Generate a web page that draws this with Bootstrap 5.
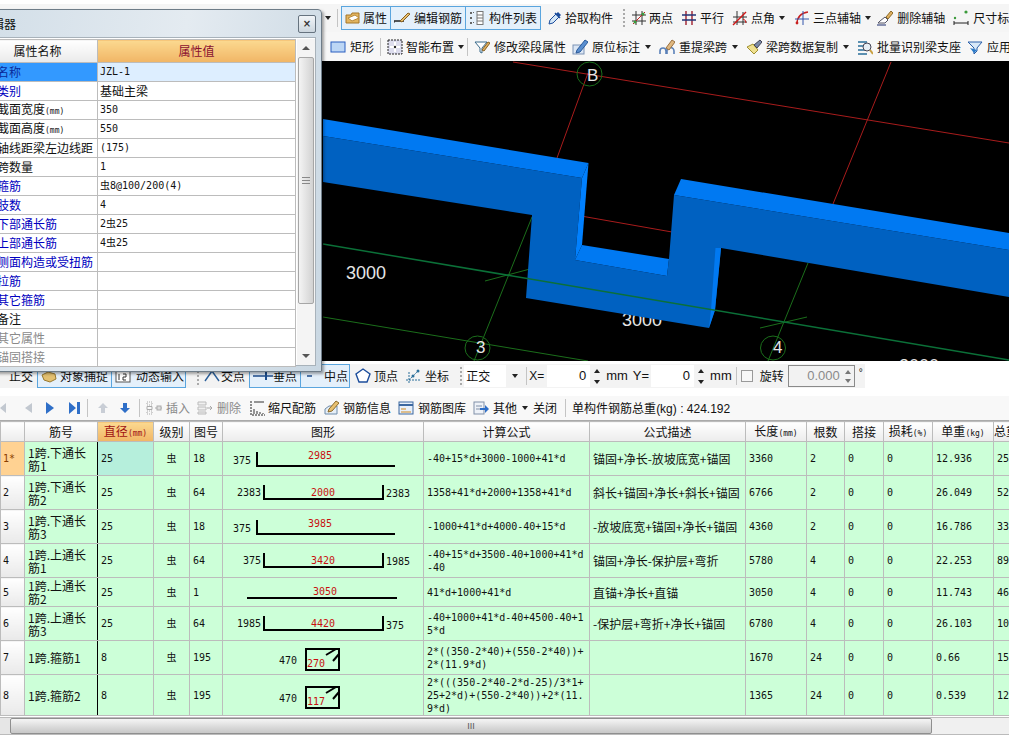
<!DOCTYPE html>
<html lang="zh-CN">
<head>
<meta charset="utf-8">
<title>属性编辑器</title>
<link href="https://cdn.jsdelivr.net/npm/bootstrap@5.3.0/dist/css/bootstrap.min.css" rel="stylesheet">
<style>
html,body{margin:0;height:736px;width:1009px;overflow:hidden;background:#fff}
body{font-family:"Noto Sans CJK SC","Liberation Sans",sans-serif;font-size:12px;line-height:14px;color:#111;position:relative}
.app-col{width:1009px;height:736px}
.tbar{flex:none;white-space:nowrap}
.tb-one{height:28px;margin-top:4px;background:#f5f5f5;padding-left:324px;gap:6px}
.tb-two{height:29px;background:#f7f7f7;padding-left:330px;gap:6px}
.tb-three{height:24px;margin-top:3px;background:#f3f3f3;width:865px}
.tb-four{height:25px;margin-top:8px;background:#f8f8f8;border-bottom:1px solid #aaa}
.tool{display:flex;align-items:center;gap:4px;height:100%}
.tool.g0{gap:0}.tool.g1{gap:1px}.tool.g2{gap:2px}.tool.g3{gap:3px}.tool.g5{gap:5px}
.tool.dim{color:#8a8a8a}
.ico{width:16px;height:16px;flex:none;display:block}
.ico.wide{width:20px}
.tri{width:0;height:0;border:3px solid transparent;border-top:4px solid #222;border-bottom:0;margin-left:1px;flex:none}
.vsep{width:1px;height:18px;background:#c4c4c4;flex:none}
.vgrip{width:0;height:18px;border-left:2px dotted #aaa;flex:none}
.hilite{background:#e4f0fb;border:1px solid #5aa5de;height:24px;padding:0 3px}
.hilite+.hilite{border-left:0}
.hilite.pr1{padding-right:1px}
.canvas-svg{display:block;flex:none}
.canvas-svg text{font-family:"Liberation Sans",sans-serif;font-size:18px;fill:#e6e6e6}
.canvas-svg text.axl{font-size:17px}
.numbox{background:#fff;height:22px;line-height:22px;text-align:right;padding-right:4px;width:43px;font-family:"Liberation Sans",sans-serif;font-size:13px;flex:none}
.numbox.pick{width:42px;text-align:left;padding:0 0 0 2px;font-family:inherit;font-size:12px}
.spin{display:flex;flex-direction:column;gap:7px;width:8px;align-items:center;flex:none}
.spin i{display:block;width:0;height:0;border:3px solid transparent}
.spin .up{border-bottom:4px solid #222;border-top:0}
.spin .dn{border-top:4px solid #222;border-bottom:0}
.latin{font-family:"Liberation Sans",sans-serif;font-size:12px}
.latin.big{font-size:13px}
.chk{width:12px;height:12px;border:1px solid #999;background:#f7f7f7;flex:none}
.angbox{width:67px;height:22px;border:1px solid #8a8a8a;background:#f2f2f2;color:#8a8a8a;display:flex;align-items:center;justify-content:flex-end;gap:4px;padding-right:2px;font-family:"Liberation Sans",sans-serif;font-size:13px;flex:none}
.angbox .up{border-bottom-color:#777}.angbox .dn{border-top-color:#777}
.angbox .spin{gap:5px}
.deg{font-size:10px;align-self:flex-start;margin-top:2px}
.l2{margin-left:2px}.l3{margin-left:3px}.l4{margin-left:4px}.l5{margin-left:5px}.l6{margin-left:6px}.l7{margin-left:7px}.l8{margin-left:8px}.l9{margin-left:9px}.l10{margin-left:10px}.l11{margin-left:11px}.l13{margin-left:13px}.l14{margin-left:14px}.l18{margin-left:18px}
.ln2{margin-left:-2px}.ln3{margin-left:-3px}.ln4{margin-left:-4px}
.p9{padding-left:9px}
.sheet-wrap{height:296px;flex:none;overflow:hidden;width:1009px}
.table.sheet{table-layout:fixed;width:1058px;border-collapse:collapse;margin:0;--bs-table-bg:transparent;--bs-table-border-color:#bcbcbc;color:#111;font-size:12px;line-height:13px}
.sheet col:nth-child(1){width:24px}.sheet col:nth-child(2){width:73px}.sheet col:nth-child(3){width:56px}.sheet col:nth-child(4){width:36px}.sheet col:nth-child(5){width:33px}.sheet col:nth-child(6){width:201px}.sheet col:nth-child(7){width:166px}.sheet col:nth-child(8){width:156px}.sheet col:nth-child(9){width:61px}.sheet col:nth-child(10){width:38px}.sheet col:nth-child(11){width:39px}.sheet col:nth-child(12){width:49px}.sheet col:nth-child(13){width:61px}.sheet col:nth-child(14){width:65px}
.table.sheet>*>*>*{padding:0 3px;vertical-align:middle;border:1px solid #bcbcbc;white-space:nowrap;background:#ccffd8;color:#111;box-shadow:none;overflow:hidden}
.sheet tr.h34>*{height:34px}.sheet tr.h29>*{height:29px}.sheet tr.h41>*{height:41px}
.table.sheet>thead>tr>th{height:20px;background:linear-gradient(#fff,#ececec);font-weight:400;text-align:center;padding:0}
.table.sheet>thead>tr>th.hot{background:linear-gradient(#fbd990,#f1b565);color:#a01010}
.table.sheet>tbody>tr>th{background:linear-gradient(#fff,#e9e9e9);font-weight:400;padding-left:2px}
.table.sheet>tbody>tr>th.hot{background:#ffd292;color:#8a3c00}
.table.sheet>tbody>tr>td.focus{background:#b6efdc}
.table.sheet>tbody>tr>td.bar-end{border-right:1px solid #000}
.table.sheet>tbody>tr>td.shape{padding:0}
.shape svg{display:block}
.mono,.table.sheet td.mono,.table.sheet th.mono,.table.prop-table td.mono{font-family:"DejaVu Sans Mono","Noto Sans CJK SC",monospace;font-size:10px}
.mid{text-align:center}
.mm{font-family:"DejaVu Sans Mono",monospace;font-size:8px}
.shape text{font-family:"DejaVu Sans Mono",monospace;font-size:10px;fill:#111;dominant-baseline:central}
.shape text.rd{fill:#c81010;text-anchor:middle}
.shape path{stroke:#000;stroke-width:2;fill:none}
.hscroll{height:18px;flex:none;background:#f0f0f0;border-top:1px solid #bbb;border-bottom:1px solid #bbb}
.hs-btn{width:10px;background:#e6e6e6;flex:none}
.hs-thumb{width:922px;background:linear-gradient(#f5f5f5,#d4d4d4 70%,#c8c8c8);border:1px solid #8f8f8f;border-radius:2px;font-family:"Liberation Sans",sans-serif;font-size:9px;color:#555;line-height:14px;text-align:center}
.prop-win{position:absolute;left:-50px;top:9px;width:372px;height:363px;background:linear-gradient(100deg,#cfdce6,#e4ebf1 55%,#c9d7e2);border:1px solid #6e7c88;border-radius:4px 4px 0 0;box-shadow:2px 2px 3px rgba(0,0,0,.35)}
.prop-title{height:27px;padding:0 5px;flex:none}
.prop-x{width:18px;height:18px;border:1px solid #66737f;border-radius:2px;background:linear-gradient(#f2f5f8,#ccd6de);font-size:10px;line-height:15px;text-align:center;color:#333;font-family:"DejaVu Sans",sans-serif;font-weight:700}
.prop-panel{margin:0 5px 0 21px;height:329px;background:#fff;border:1px solid #a8b2ba;padding:1px 0 0 4px}
.table.prop-table{table-layout:fixed;width:318px;border-collapse:collapse;margin:0;font-size:12px;line-height:14px;--bs-table-bg:transparent;flex:none}
.prop-table col:nth-child(1){width:120px}.prop-table col:nth-child(2){width:198px}
.table.prop-table>*>*>*{height:19px;padding:0 2px;border:1px solid #bcbcbc;background:#fff;color:#111;white-space:nowrap;vertical-align:middle;box-shadow:none;overflow:hidden}
.table.prop-table>thead>tr>th{height:23px;font-weight:400;text-align:center;background:linear-gradient(#fff,#eaeaea);color:#111}
.table.prop-table>thead>tr>th.gold{background:linear-gradient(#fbd990,#f1b565);color:#8a1030}
.table.prop-table>tbody>tr>th{font-weight:400;padding-left:19px}
.table.prop-table>tbody>tr>th.bl{color:#0000c0}
.table.prop-table>tbody>tr>th.gy{color:#8a8a8a}
.table.prop-table>tbody>tr>th.sel{background:#3399ff;color:#0a2a9a}
.table.prop-table>tbody>tr>td.sel{background:#ddeeff}
.vscroll{width:18px;flex:none;margin-left:1px;background:#f4f4f4}
.vthumb{margin:7px 1px 0 1px;height:247px;background:linear-gradient(90deg,#f4f4f4,#d2d2d2);border:1px solid #a6a6a6;border-radius:2px;flex:none}
.vgrip-lines{width:8px;height:7px;border-top:1px solid #888;border-bottom:1px solid #888;position:relative}
.vgrip-lines::after{content:"";position:absolute;left:0;right:0;top:2px;height:1px;background:#888}
.v-tri-up,.v-tri-dn{width:0;height:0;border:4px solid transparent;align-self:center;flex:none}
.v-tri-up{border-bottom:4px solid #555;border-top:0;margin-top:7px}
.v-tri-dn{border-top:4px solid #555;border-bottom:0;margin-top:50px}
</style>
</head>
<body>
<svg width="0" height="0" class="position-absolute">
<defs>
<symbol id="i-prop" viewBox="0 0 16 16"><path d="M1 5h5l1-2h7v10H1z" fill="#e2b560" stroke="#a5772a"/><path d="M3 8l7-3 4 3-7 3z" fill="#fff" stroke="#b98a3a"/></symbol>
<symbol id="i-rebar" viewBox="0 0 16 16"><path d="M0 11h10" stroke="#222" stroke-width="1.5"/><path d="M0 11v2" stroke="#222"/><path d="M6 11L14 3l2 1-8 8z" fill="#e8c070" stroke="#886020"/></symbol>
<symbol id="i-list" viewBox="0 0 16 16"><g fill="#666"><rect x="1" y="2" width="2" height="2"/><rect x="1" y="7" width="2" height="2"/><rect x="1" y="12" width="2" height="2"/><rect x="4" y="2" width="1" height="1"/><rect x="4" y="12" width="1" height="1"/></g><rect x="8" y="1.5" width="6" height="13" fill="#fff" stroke="#777"/><path d="M8 5h6M8 8h6M8 11h6" stroke="#777"/></symbol>
<symbol id="i-drop" viewBox="0 0 16 16"><path d="M2 14l1-4 6-6 3 3-6 6z" fill="#d5e7f7" stroke="#1c4d9c"/><path d="M9 4l2-2 3 3-2 2z" fill="#1c4d9c"/><path d="M8 3l5 5" stroke="#1c4d9c" stroke-width="1.5"/></symbol>
<symbol id="i-two" viewBox="0 0 16 16"><path d="M5 1v14M11 1v14M1 5h14M1 11h14" stroke="#333"/><path d="M2 14L14 2" stroke="#c02020"/><circle cx="4" cy="12" r="1.5" fill="#3a9a3a"/><circle cx="12" cy="4" r="1.5" fill="#3a9a3a"/></symbol>
<symbol id="i-par" viewBox="0 0 16 16"><path d="M5 1v14M11 1v14" stroke="#a02030" stroke-width="1.4"/><path d="M1 5h14M1 10h14" stroke="#223377" stroke-width="1.4"/></symbol>
<symbol id="i-ang" viewBox="0 0 16 16"><path d="M5 1v14M11 2v13M1 7h14M1 12h14" stroke="#333"/><path d="M1 15L14 2" stroke="#d01818" stroke-width="1.4"/><path d="M11 9a4 4 0 0 1 3 4" stroke="#d01818" fill="none"/></symbol>
<symbol id="i-arc" viewBox="0 0 16 16"><path d="M3 14C3 7 7 3 14 2" stroke="#c82020" stroke-width="1.4" fill="none"/><path d="M1 9h14M9 1v14" stroke="#3355aa"/><circle cx="3" cy="13" r="1.4" fill="#c82020"/></symbol>
<symbol id="i-brush" viewBox="0 0 16 16"><path d="M9 7l5-6 2 2-5 6z" fill="#e0b060" stroke="#8a6a2a"/><path d="M3 11l5-4 3 3-3 3H1z" fill="#fff" stroke="#556"/><path d="M0 15h9" stroke="#8890b0" stroke-width="2"/></symbol>
<symbol id="i-dim" viewBox="0 0 16 16"><path d="M1 11v4M15 11v4M1 13h14" stroke="#222"/><circle cx="2" cy="8" r="1.2" fill="#3a9a3a"/><circle cx="13" cy="2" r="1.6" fill="#3a9a3a"/></symbol>
<symbol id="i-rect" viewBox="0 0 16 16"><rect x="1" y="3" width="14" height="10" fill="#bcd6f5" stroke="#2a5fc0"/></symbol>
<symbol id="i-smart" viewBox="0 0 16 16"><rect x="1" y="1" width="14" height="14" fill="#dde" stroke="#222" stroke-dasharray="2 1"/><path d="M8 3v10M3 8h10" stroke="#fff" stroke-width="2"/><circle cx="8" cy="8" r="1.2" fill="#222"/></symbol>
<symbol id="i-funnel" viewBox="0 0 16 16"><path d="M1 3h12L8 9v5l-2-1V9z" fill="#fff" stroke="#3a6a8a"/><path d="M8 11l6-8 2 1-6 8z" fill="#e0b060" stroke="#886020"/></symbol>
<symbol id="i-note" viewBox="0 0 16 16"><rect x="1" y="6" width="11" height="9" fill="#dbe6f4" stroke="#7c93b5"/><path d="M5 11L13 1l3 2-8 10-4 1z" fill="#5a8fd0" stroke="#2a5a9a"/></symbol>
<symbol id="i-span" viewBox="0 0 16 16"><path d="M1 15v-3a3 3 0 0 1 6 0v3M8 15v-3a3 3 0 0 1 7 0v3" fill="none" stroke="#5a80b8" stroke-width="1.6"/><path d="M7 9l6-8 3 2-6 8z" fill="#e0b880" stroke="#997040"/></symbol>
<symbol id="i-copy" viewBox="0 0 16 16"><path d="M1 8l6-3 5 6-4 4z" fill="#efe090" stroke="#a09030"/><path d="M8 6l6-5 2 2-5 6z" fill="#7a8aa8" stroke="#445"/></symbol>
<symbol id="i-batch" viewBox="0 0 16 16"><path d="M1 3h9M1 7h7M1 11h7M1 15h9" stroke="#2a6f9a" stroke-width="1.5"/><circle cx="10" cy="8" r="4" fill="#e6eef5" stroke="#445"/><path d="M13 11l3 4" stroke="#c9a040" stroke-width="2"/></symbol>
<symbol id="i-apply" viewBox="0 0 16 16"><path d="M1 3h14l-5 6v3l-3 3v-6z" fill="#d8e8f8" stroke="#2a5fa8"/><path d="M3 9l4 5 3-3z" fill="#2a7ac8"/></symbol>
<symbol id="i-ins" viewBox="0 0 16 16"><path d="M1 2h5v3H1zM1 11h5v3H1z" fill="none" stroke="#aaa" stroke-dasharray="1 1"/><path d="M1 6.5h5v3H1z" fill="none" stroke="#aaa"/><path d="M9 8h7" stroke="#aaa"/><rect x="11" y="6" width="4" height="4" fill="#ddd" stroke="#aaa"/></symbol>
<symbol id="i-del" viewBox="0 0 16 16"><path d="M1 2h8v3H1zM1 7h8v3H1zM1 12h8v2H1z" fill="#f0f0f0" stroke="#bbb"/><path d="M10 8h5m-2-2l2 2-2 2" fill="none" stroke="#aaa"/></symbol>
<symbol id="i-scale" viewBox="0 0 16 16"><path d="M1 1v14h14" fill="none" stroke="#222" stroke-dasharray="2 1"/><path d="M4 2h10M4 14v-5M7 14v-3M10 14v-2M13 14v-1" stroke="#333"/></symbol>
<symbol id="i-info" viewBox="0 0 16 16"><path d="M2 9l4-3h8v8H2z" fill="#e6eef6" stroke="#6f8cab"/><path d="M6 9L13 1l3 2-7 8-4 1z" fill="#e8c070" stroke="#8a6a2a"/></symbol>
<symbol id="i-lib" viewBox="0 0 16 16"><rect x="1" y="2" width="14" height="12" fill="#e8f0fa" stroke="#3c68a0"/><path d="M1 5h14" stroke="#3c68a0" stroke-width="2"/><path d="M3 9h5M3 12h10" stroke="#d08a20"/></symbol>
<symbol id="i-other" viewBox="0 0 16 16"><rect x="1" y="2" width="10" height="12" fill="#eef2f8" stroke="#8090a8"/><path d="M3 6h6M3 9h6" stroke="#8090a8"/><path d="M7 8h5V5l4 4-4 4v-3H7z" fill="#2f6fc8"/></symbol>
<symbol id="i-obj" viewBox="0 0 16 16"><path d="M1 7l6-3 7 2 1 5-6 3-6-2z" fill="#e3c070" stroke="#997a30"/></symbol>
<symbol id="i-dyn" viewBox="0 0 16 16"><rect x="1" y="2" width="14" height="12" fill="#fff" stroke="#555"/><path d="M4 6v6M8 6h3v3H8v3h3" fill="none" stroke="#333"/></symbol>
<symbol id="i-cross" viewBox="0 0 16 16"><path d="M1 13L8 3l7 10" fill="none" stroke="#2a5f9a" stroke-width="1.4"/></symbol>
<symbol id="i-perp" viewBox="0 0 20 16"><path d="M0 8h20" stroke="#1c4d8c" stroke-width="1.5"/><path d="M13 4v8" stroke="#1c4d8c" stroke-width="2"/></symbol>
<symbol id="i-midp" viewBox="0 0 16 16"><path d="M3 8h5" stroke="#1c4d8c" stroke-width="1.5"/></symbol>
<symbol id="i-vert" viewBox="0 0 16 16"><path d="M8 1l7 5-3 8H4L1 6z" fill="#fff" stroke="#1c4d9c" stroke-width="1.4"/></symbol>
<symbol id="i-coord" viewBox="0 0 16 16"><path d="M1 12h14M4 15V3M4 12L13 3" fill="none" stroke="#2a6f9a" stroke-dasharray="2 1"/><circle cx="13" cy="3" r="1.5" fill="#2a6f9a"/><circle cx="8" cy="8" r="1.5" fill="#2a6f9a"/></symbol>
</defs>
</svg>

<div class="app-col d-flex flex-column">
  <div class="tbar tb-one d-flex align-items-center">
    <span class="tri"></span><span class="vsep"></span>
    <div class="d-flex ln3">
      <div class="tool hilite g2"><svg class="ico"><use href="#i-prop"/></svg>属性</div>
      <div class="tool hilite"><svg class="ico"><use href="#i-rebar"/></svg>编辑钢筋</div>
      <div class="tool hilite"><svg class="ico"><use href="#i-list"/></svg>构件列表</div>
    </div>
    <div class="tool g2"><svg class="ico"><use href="#i-drop"/></svg>拾取构件</div>
    <span class="vgrip l4"></span>
    <div class="tool g2"><svg class="ico"><use href="#i-two"/></svg>两点</div>
    <div class="tool g3 l2"><svg class="ico"><use href="#i-par"/></svg>平行</div>
    <div class="tool g3 l2"><svg class="ico"><use href="#i-ang"/></svg>点角<span class="tri"></span></div>
    <div class="tool g3 l3"><svg class="ico"><use href="#i-arc"/></svg>三点辅轴<span class="tri"></span></div>
    <div class="tool"><svg class="ico"><use href="#i-brush"/></svg>删除辅轴</div>
    <div class="tool l2"><svg class="ico"><use href="#i-dim"/></svg>尺寸标注</div>
  </div>
  <div class="tbar tb-two d-flex align-items-center">
    <div class="tool"><svg class="ico"><use href="#i-rect"/></svg>矩形</div>
    <span class="vsep"></span>
    <div class="tool g3"><svg class="ico"><use href="#i-smart"/></svg>智能布置<span class="tri"></span></div>
    <span class="vsep ln3"></span>
    <div class="tool"><svg class="ico"><use href="#i-funnel"/></svg>修改梁段属性</div>
    <div class="tool"><svg class="ico"><use href="#i-note"/></svg>原位标注<span class="tri"></span></div>
    <div class="tool l2"><svg class="ico"><use href="#i-span"/></svg>重提梁跨<span class="tri"></span></div>
    <div class="tool l2"><svg class="ico"><use href="#i-copy"/></svg>梁跨数据复制<span class="tri"></span></div>
    <div class="tool l2"><svg class="ico"><use href="#i-batch"/></svg>批量识别梁支座</div>
    <div class="tool"><svg class="ico"><use href="#i-apply"/></svg>应用到</div>
  </div>

  <svg class="canvas-svg" width="1009" height="300" viewBox="0 61 1009 300">
    <rect x="0" y="61" width="1009" height="300" fill="#000"/>
    <g fill="none" stroke="#a81c1c" stroke-width="1">
      <path d="M513 62L1009 143"/><path d="M588 73L557 158"/><path d="M891 62L833 204"/><path d="M581 216L672 232"/>
    </g>
    <g fill="none" stroke="#1b6e1b" stroke-width="1">
      <ellipse cx="589.5" cy="74" rx="12.5" ry="12"/><ellipse cx="477.5" cy="348" rx="12.5" ry="12"/><ellipse cx="773" cy="348" rx="12.5" ry="12"/>
      <path d="M532 217L474 361"/><path d="M808 263L768 361"/><path d="M485 281L530 269"/><path d="M760 328L807 317"/>
      <path d="M323 317L588 361"/>
    </g>
    <text x="346" y="279">3000</text>
    <text x="622" y="326">3000</text>
    <text x="899" y="372">3000</text>
    <text class="axl" x="587" y="81">B</text>
    <text class="axl" x="476" y="353">3</text>
    <text class="axl" x="773" y="353">4</text>
    <path d="M323 136L582 178L575 260L667 276L669 259L674 195L1009 250V297L721 248L715 310L709 328L526 298L532 215L323 182Z" fill="#0061c1"/>
    <path d="M323 119L588.5 163L582 178L323 136Z" fill="#0079f2"/>
    <path d="M588.5 163L582 245L575 260L582 178Z" fill="#0080ff"/>
    <path d="M582 245L669 259L667 276L575 260Z" fill="#0079f2"/>
    <path d="M681 179L674 195L1009 250V233Z" fill="#0079f2"/>
    <path d="M715.5 248L721 248L715 310L709 328L711 310Z" fill="#0079f2"/>
    <path d="M323 244L1009 360" fill="none" stroke="#0b7038" stroke-width="1.5"/>
  </svg>

  <div class="tbar tb-three d-flex align-items-center">
    <div class="tool p9">正交</div>
    <div class="d-flex l4">
      <div class="tool hilite g3"><svg class="ico"><use href="#i-obj"/></svg>对象捕捉</div>
      <div class="tool hilite g5 pr1"><svg class="ico"><use href="#i-dyn"/></svg>动态输入</div>
    </div>
    <span class="vgrip l11"></span>
    <div class="tool g1 l5"><svg class="ico"><use href="#i-cross"/></svg>交点</div>
    <div class="d-flex l4">
      <div class="tool hilite g0"><svg class="ico wide"><use href="#i-perp"/></svg>垂点</div>
      <div class="tool hilite pr1"><svg class="ico"><use href="#i-midp"/></svg>中点</div>
    </div>
    <div class="tool g3 l5"><svg class="ico"><use href="#i-vert"/></svg>顶点</div>
    <div class="tool l7"><svg class="ico"><use href="#i-coord"/></svg>坐标</div>
    <span class="vgrip l11"></span>
    <div class="numbox pick l2">正交</div>
    <span class="tri l6"></span>
    <span class="vsep l8"></span>
    <span class="latin l2">X=</span>
    <div class="numbox l3">0</div>
    <div class="spin l3"><i class="up"></i><i class="dn"></i></div>
    <span class="latin big l5">mm</span>
    <span class="latin big l5">Y=</span>
    <div class="numbox l2">0</div>
    <div class="spin l3"><i class="up"></i><i class="dn"></i></div>
    <span class="latin big l5">mm</span>
    <span class="vsep l4"></span>
    <span class="chk l4"></span>
    <span class="l7">旋转</span>
    <div class="angbox l4">0.000<div class="spin"><i class="up"></i><i class="dn"></i></div></div>
    <span class="latin deg l4">°</span>
  </div>

  <div class="tbar tb-four d-flex align-items-center">
    <svg width="8" height="14" class="ln2"><path d="M8 2v10L2 7z" fill="#c2c8d0"/></svg>
    <svg width="8" height="14" class="l18"><path d="M8 2v10L1 7z" fill="#c2c8d0"/></svg>
    <svg width="10" height="14" class="l13"><path d="M1 1v12l8-6z" fill="#2f6fc8"/></svg>
    <svg width="11" height="14" class="l14"><path d="M0 1v12l7-6zM8 1h3v12H8z" fill="#2f6fc8"/></svg>
    <span class="vsep l7"></span>
    <svg width="12" height="14" class="l9"><path d="M6 2l5 5H8v5H4V7H1z" fill="#c9ced6"/></svg>
    <svg width="12" height="14" class="l10"><path d="M4 2h4v5h3l-5 5-5-5h3z" fill="#2f6fc8"/></svg>
    <span class="vsep l8"></span>
    <div class="tool dim l6"><svg class="ico"><use href="#i-ins"/></svg>插入</div>
    <div class="tool dim l7"><svg class="ico"><use href="#i-del"/></svg>删除</div>
    <div class="tool g2 l9"><svg class="ico"><use href="#i-scale"/></svg>缩尺配筋</div>
    <div class="tool l7"><svg class="ico"><use href="#i-info"/></svg>钢筋信息</div>
    <div class="tool l7"><svg class="ico"><use href="#i-lib"/></svg>钢筋图库</div>
    <div class="tool l7"><svg class="ico"><use href="#i-other"/></svg>其他<span class="tri"></span></div>
    <div class="tool l5">关闭</div>
    <span class="vsep l8"></span>
    <span class="l6">单构件钢筋总重<span class="latin">(kg) : 424.192</span></span>
  </div>

  <div class="sheet-wrap">
    <table class="table table-bordered sheet">
      <colgroup><col><col><col><col><col><col><col><col><col><col><col><col><col><col></colgroup>
      <thead><tr>
        <th></th><th>筋号</th><th class="hot">直径<span class="mm">(mm)</span></th><th>级别</th><th>图号</th><th>图形</th><th>计算公式</th><th>公式描述</th><th>长度<span class="mm">(mm)</span></th><th>根数</th><th>搭接</th><th>损耗<span class="mm">(%)</span></th><th>单重<span class="mm">(kg)</span></th><th class="text-start">总重<span class="mm">(kg)</span></th>
      </tr></thead>
      <tbody>
        <tr class="h34">
          <th class="hot mono">1*</th><td class="bar-end">1跨.下通长<br>筋1</td><td class="mono focus">25</td><td class="mono mid">虫</td><td class="mono">18</td>
          <td class="shape"><svg width="201" height="33"><path d="M34 10V24H172"/><text x="10" y="18">375</text><text class="rd" x="97" y="13">2985</text></svg></td>
          <td class="mono">-40+15*d+3000-1000+41*d</td><td>锚固+净长-放坡底宽+锚固</td><td class="mono">3360</td><td class="mono">2</td><td class="mono">0</td><td class="mono">0</td><td class="mono">12.936</td><td class="mono">25.872</td>
        </tr>
        <tr class="h34">
          <th class="mono">2</th><td class="bar-end">1跨.下通长<br>筋2</td><td class="mono">25</td><td class="mono mid">虫</td><td class="mono">64</td>
          <td class="shape"><svg width="201" height="33"><path d="M41 9V23H160V9"/><text x="14" y="16">2383</text><text x="163" y="17">2383</text><text class="rd" x="100" y="16">2000</text></svg></td>
          <td class="mono">1358+41*d+2000+1358+41*d</td><td>斜长+锚固+净长+斜长+锚固</td><td class="mono">6766</td><td class="mono">2</td><td class="mono">0</td><td class="mono">0</td><td class="mono">26.049</td><td class="mono">52.098</td>
        </tr>
        <tr class="h34">
          <th class="mono">3</th><td class="bar-end">1跨.下通长<br>筋3</td><td class="mono">25</td><td class="mono mid">虫</td><td class="mono">18</td>
          <td class="shape"><svg width="201" height="33"><path d="M34 10V24H172"/><text x="10" y="18">375</text><text class="rd" x="97" y="13">3985</text></svg></td>
          <td class="mono">-1000+41*d+4000-40+15*d</td><td>-放坡底宽+锚固+净长+锚固</td><td class="mono">4360</td><td class="mono">2</td><td class="mono">0</td><td class="mono">0</td><td class="mono">16.786</td><td class="mono">33.572</td>
        </tr>
        <tr class="h34">
          <th class="mono">4</th><td class="bar-end">1跨.上通长<br>筋1</td><td class="mono">25</td><td class="mono mid">虫</td><td class="mono">64</td>
          <td class="shape"><svg width="201" height="33"><path d="M41 9V23H160V9"/><text x="20" y="16">375</text><text x="163" y="17">1985</text><text class="rd" x="100" y="16">3420</text></svg></td>
          <td class="mono">-40+15*d+3500-40+1000+41*d<br>-40</td><td>锚固+净长-保护层+弯折</td><td class="mono">5780</td><td class="mono">4</td><td class="mono">0</td><td class="mono">0</td><td class="mono">22.253</td><td class="mono">89.012</td>
        </tr>
        <tr class="h29">
          <th class="mono">5</th><td class="bar-end">1跨.上通长<br>筋2</td><td class="mono">25</td><td class="mono mid">虫</td><td class="mono">1</td>
          <td class="shape"><svg width="201" height="28"><path d="M24 20H174"/><text class="rd" x="102" y="13">3050</text></svg></td>
          <td class="mono">41*d+1000+41*d</td><td>直锚+净长+直锚</td><td class="mono">3050</td><td class="mono">4</td><td class="mono">0</td><td class="mono">0</td><td class="mono">11.743</td><td class="mono">46.972</td>
        </tr>
        <tr class="h34">
          <th class="mono">6</th><td class="bar-end">1跨.上通长<br>筋3</td><td class="mono">25</td><td class="mono mid">虫</td><td class="mono">64</td>
          <td class="shape"><svg width="201" height="33"><path d="M41 9V23H160V9"/><text x="14" y="16">1985</text><text x="163" y="18">375</text><text class="rd" x="100" y="16">4420</text></svg></td>
          <td class="mono">-40+1000+41*d-40+4500-40+1<br>5*d</td><td>-保护层+弯折+净长+锚固</td><td class="mono">6780</td><td class="mono">4</td><td class="mono">0</td><td class="mono">0</td><td class="mono">26.103</td><td class="mono">104.412</td>
        </tr>
        <tr class="h34">
          <th class="mono">7</th><td class="bar-end">1跨.箍筋1</td><td class="mono">8</td><td class="mono mid">虫</td><td class="mono">195</td>
          <td class="shape"><svg width="201" height="33"><path d="M83 8H116V29H83Z"/><path d="M103 14L113 8M110 20L116 13"/><text x="56" y="19">470</text><text class="rd" x="93" y="22">270</text></svg></td>
          <td class="mono">2*((350-2*40)+(550-2*40))+<br>2*(11.9*d)</td><td></td><td class="mono">1670</td><td class="mono">24</td><td class="mono">0</td><td class="mono">0</td><td class="mono">0.66</td><td class="mono">15.84</td>
        </tr>
        <tr class="h41">
          <th class="mono">8</th><td class="bar-end">1跨.箍筋2</td><td class="mono">8</td><td class="mono mid">虫</td><td class="mono">195</td>
          <td class="shape"><svg width="201" height="40"><path d="M83 12H116V33H83Z"/><path d="M103 18L113 12M110 24L116 17"/><text x="56" y="23">470</text><text class="rd" x="93" y="26">117</text></svg></td>
          <td class="mono">2*(((350-2*40-2*d-25)/3*1+<br>25+2*d)+(550-2*40))+2*(11.<br>9*d)</td><td></td><td class="mono">1365</td><td class="mono">24</td><td class="mono">0</td><td class="mono">0</td><td class="mono">0.539</td><td class="mono">12.936</td>
        </tr>
      </tbody>
    </table>
  </div>

  <div class="hscroll d-flex">
    <div class="hs-btn"></div>
    <div class="hs-thumb">III</div>
  </div>
</div>

<div class="prop-win d-flex flex-column">
  <div class="prop-title d-flex justify-content-between align-items-center">
    <span>属性编辑器</span><span class="prop-x">×</span>
  </div>
  <div class="prop-panel d-flex">
    <table class="table prop-table">
      <colgroup><col><col></colgroup>
      <thead><tr><th>属性名称</th><th class="gold">属性值</th></tr></thead>
      <tbody>
        <tr><th class="bl sel">名称</th><td class="mono sel">JZL-1</td></tr>
        <tr><th class="bl">类别</th><td>基础主梁</td></tr>
        <tr><th>截面宽度<span class="mm">(mm)</span></th><td class="mono">350</td></tr>
        <tr><th>截面高度<span class="mm">(mm)</span></th><td class="mono">550</td></tr>
        <tr><th>轴线距梁左边线距</th><td class="mono">(175)</td></tr>
        <tr><th>跨数量</th><td class="mono">1</td></tr>
        <tr><th class="bl">箍筋</th><td class="mono">虫8@100/200(4)</td></tr>
        <tr><th class="bl">肢数</th><td class="mono">4</td></tr>
        <tr><th class="bl">下部通长筋</th><td class="mono">2虫25</td></tr>
        <tr><th class="bl">上部通长筋</th><td class="mono">4虫25</td></tr>
        <tr><th class="bl">侧面构造或受扭筋</th><td></td></tr>
        <tr><th class="bl">拉筋</th><td></td></tr>
        <tr><th class="bl">其它箍筋</th><td></td></tr>
        <tr><th>备注</th><td></td></tr>
        <tr><th class="gy">其它属性</th><td></td></tr>
        <tr><th class="gy">锚固搭接</th><td></td></tr>
      </tbody>
    </table>
    <div class="vscroll d-flex flex-column">
      <span class="v-tri-up"></span>
      <div class="vthumb d-flex align-items-center justify-content-center"><span class="vgrip-lines"></span></div>
      <span class="v-tri-dn"></span>
    </div>
  </div>
</div>
<script src="https://cdn.jsdelivr.net/npm/bootstrap@5.3.0/dist/js/bootstrap.bundle.min.js"></script>
</body>
</html>
